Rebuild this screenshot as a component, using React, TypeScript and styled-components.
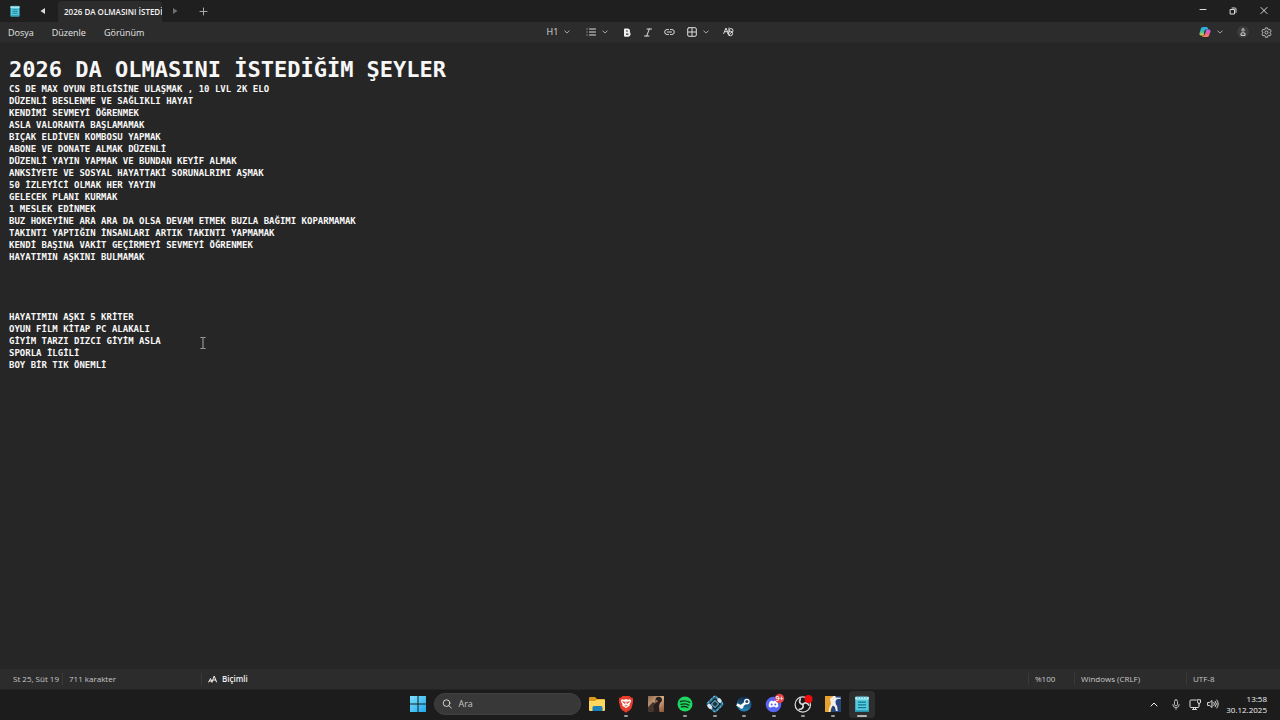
import React from "react";
import styled, { createGlobalStyle, css } from "styled-components";

const GlobalStyle = createGlobalStyle`
  * { box-sizing: border-box; }
  html, body { margin: 0; background: #262626; }
  button, input { font: inherit; color: inherit; }
`;

const Screen = styled.div`
  min-height: 100vh;
  display: flex;
  flex-direction: column;
  background: #262626;
  color: #e6e6e6;
  font-family: "Open Sans", "Noto Sans", sans-serif;
  font-size: 9px;
  line-height: 12px;
`;

const TitleBar = styled.header`
  display: flex;
  align-items: stretch;
  height: 22px;
  background: #1f1f1f;
`;

const AppIcon = styled.div`
  width: 28px;
  padding-left: 9px;
  display: flex;
  align-items: center;
`;

const IconButton = styled.button<{ $width: number; $dim?: boolean }>`
  width: ${(p) => p.$width}px;
  padding: 0;
  border: 0;
  background: none;
  display: flex;
  align-items: center;
  justify-content: center;
  gap: 6px;
  color: ${(p) => (p.$dim ? "#707070" : "#dcdcdc")};
`;

const Tab = styled.button`
  width: 104px;
  margin-top: 1px;
  padding: 0 0 0 6px;
  border: 0;
  border-radius: 4px 4px 0 0;
  background: #2c2c2c;
  color: #f4f4f4;
  font-weight: 600;
  font-size: 8px;
  text-align: left;
`;

const TabLabel = styled.span`
  display: block;
  overflow: hidden;
  white-space: nowrap;
`;

const Spacer = styled.div`
  flex: 1;
`;

const Toolbar = styled.div`
  display: grid;
  grid-template-columns: 1fr auto 1fr;
  height: 21px;
  background: #2c2c2c;
  border-bottom: 1px solid #292929;
`;

const Menus = styled.nav`
  display: flex;
  gap: 18px;
  padding: 2px 0 0 8px;
`;

const MenuButton = styled.button`
  padding: 0;
  border: 0;
  background: none;
`;

const Tools = styled.div`
  display: flex;
  padding-left: 2px;
`;

const ToolbarEnd = styled.div`
  display: flex;
  justify-content: flex-end;
  padding-right: 3px;
`;

const Avatar = styled.span`
  display: flex;
  align-items: center;
  justify-content: center;
  width: 12px;
  height: 12px;
  border-radius: 50%;
  background: #3c3c3c;
`;

const Editor = styled.main`
  position: relative;
  flex: 1;
  padding: 13px 9px;
  color: #f7f7f7;
  font-family: "DejaVu Sans Mono", monospace;
  font-weight: 700;
  font-size: 9px;
  line-height: 12px;
`;

const Heading = styled.h1`
  margin: 0;
  font-size: 22px;
  line-height: 27px;
`;

const Line = styled.p`
  margin: 0;
  min-height: 12px;
`;

const Pointer = styled.svg`
  position: absolute;
  left: 199px;
  top: 294px;
`;

const StatusBar = styled.footer`
  display: flex;
  align-items: center;
  height: 20px;
  padding-left: 13px;
  background: #2c2c2c;
  color: #c8c8c8;
  font-size: 8px;
`;

const StatusItem = styled.span<{ $width: number; $strong?: boolean }>`
  display: flex;
  align-items: center;
  gap: 5px;
  width: ${(p) => p.$width}px;
  white-space: nowrap;
  ${(p) =>
    p.$strong &&
    css`
      color: #f0f0f0;
      font-weight: 600;
    `}
`;

const Divider = styled.span`
  width: 1px;
  height: 12px;
  margin-right: 6px;
  background: #393939;
`;

const Taskbar = styled.div`
  display: grid;
  grid-template-columns: 1fr auto 1fr;
  align-items: center;
  height: 31px;
  padding-bottom: 2px;
  background: #1c1c1c;
  border-top: 1px solid #242424;
`;

const Dock = styled.nav`
  grid-column: 2;
  display: flex;
  align-items: center;
  gap: 3px;
`;

const Search = styled.label`
  display: flex;
  align-items: center;
  gap: 6px;
  width: 147px;
  height: 22px;
  padding: 0 7px;
  border: 1px solid #414141;
  border-radius: 11px;
  background: #383838;
`;

const SearchInput = styled.input`
  width: 100%;
  min-width: 0;
  padding: 0;
  border: 0;
  outline: 0;
  background: none;
  &::placeholder { color: #c4c4c4; opacity: 1; }
`;

const DockApps = styled.div`
  display: flex;
  justify-content: space-between;
  width: 291px;
`;

const DockButton = styled.button<{ $active?: boolean }>`
  display: flex;
  flex-direction: column;
  align-items: center;
  justify-content: flex-end;
  gap: 2px;
  width: 26px;
  height: 27px;
  padding: 0 0 1px;
  border: 0;
  border-radius: 4px;
  background: ${(p) => (p.$active ? "#2e2e2e" : "transparent")};
  svg { flex: none; overflow: visible; }
`;

const Running = styled.span<{ $state: "off" | "on" | "active" }>`
  flex: none;
  width: ${(p) => (p.$state === "active" ? 10 : 4)}px;
  height: 2px;
  border-radius: 1px;
  background: ${(p) =>
    p.$state === "off" ? "transparent" : p.$state === "on" ? "#9b9b9b" : "#b5b5b5"};
`;

const Tray = styled.div`
  display: flex;
  align-items: center;
  justify-content: flex-end;
  padding-right: 13px;
`;

const Clock = styled.time`
  margin-left: 5px;
  color: #f0f0f0;
  font-size: 8px;
  line-height: 11px;
  text-align: right;
`;

const Chevron = () => (
  <svg width="6" height="4" viewBox="0 0 6 4" fill="none" stroke="#a8a8a8" strokeWidth="1">
    <path d="M.5.6 3 3.1 5.500.6" />
  </svg>
);

const NotepadIcon = ({ size }: { size: number }) => (
  <svg width={size} height={size} viewBox="0 0 20 20">
    <rect x="2.500" y="2" width="15" height="17" rx="1" fill="#55cbe0" />
    <path d="M2.500 2h15v3h-15z" fill="#b6edf4" />
    <path d="M5.500.8v3M8.500.8v3M11.500.8v3M14.500.8v3" stroke="#3aa5bd" strokeWidth="1" />
    <path d="M5.500 8h9M5.500 11h9M5.500 14h9" stroke="#17758e" strokeWidth="1.300" />
    <path d="M2.500 17h15v1a1 1 0 0 1-1 1h-13a1 1 0 0 1-1-1z" fill="#2a93b0" />
  </svg>
);

const Stroke = ({
  w,
  h,
  d,
  sw = 1,
  color = "currentColor",
}: {
  w: number;
  h: number;
  d: string;
  sw?: number;
  color?: string;
}) => (
  <svg width={w} height={h} viewBox={`0 0 ${w} ${h}`} fill="none" stroke={color} strokeWidth={sw} strokeLinecap="round" strokeLinejoin="round">
    <path d={d} />
  </svg>
);

const CopilotIcon = () => (
  <svg width="12" height="12" viewBox="0 0 24 24">
    <defs>
      <linearGradient id="cpA" x1="0" y1="0" x2="0" y2="1">
        <stop offset="0" stopColor="#2aa7f0" />
        <stop offset=".55" stopColor="#35c3a2" />
        <stop offset="1" stopColor="#f0c93a" />
      </linearGradient>
      <linearGradient id="cpB" x1="0" y1="0" x2="0" y2="1">
        <stop offset="0" stopColor="#b06af0" />
        <stop offset=".5" stopColor="#ee5aa0" />
        <stop offset="1" stopColor="#f58a4b" />
      </linearGradient>
    </defs>
    <path d="M8 2h7c2 0 2.500 1.500 3 3l.5 2h-3c-2 0-3 1-3.500 3l-1.500 6c-.5 2-1.500 3-3.500 3H4c-3 0-3.500-2.500-2.800-5L3.500 6C4.200 3.500 5.500 2 8 2z" fill="url(#cpA)" />
    <path d="M16 22H9c-2 0-2.500-1.500-3-3h2.500c2 0 3-1 3.500-3l1.500-6c.5-2 1.500-3 3.500-3H20c3 0 3.500 2.500 2.800 5L20.500 18c-.7 2.500-2 4-4.500 4z" fill="url(#cpB)" />
    <path d="M12.500 7.500 10.500 16" stroke="#333" strokeWidth="2" />
  </svg>
);

const GearIcon = () => (
  <svg width="11" height="11" viewBox="0 0 24 24" fill="none" stroke="#c8c8c8" strokeWidth="2" strokeLinejoin="round">
    <path d="M9.700 2h4.600l.8 3 1.700 1 3-.9 2.300 4-2.200 2.200v1.800l2.200 2.100-2.300 4-3-.9-1.700 1-.8 3H9.700l-.8-3-1.700-1-3 .9-2.300-4 2.200-2.100v-1.800L1.900 9.100l2.300-4 3 .9 1.700-1z" />
    <circle cx="12" cy="12" r="3.300" />
  </svg>
);

const StartIcon = () => (
  <svg width="16" height="16" viewBox="0 0 16 16">
    <defs>
      <linearGradient id="win" x1="0" y1="0" x2="1" y2="1">
        <stop offset="0" stopColor="#7be0fb" />
        <stop offset="1" stopColor="#1fa8ee" />
      </linearGradient>
    </defs>
    <path d="M0 0h7.500v7.500H0zM8.500 0H16v7.500H8.500zM0 8.500h7.500V16H0zM8.500 8.500H16V16H8.500z" fill="url(#win)" />
  </svg>
);

const FolderIcon = () => (
  <svg width="18" height="18" viewBox="0 0 18 18">
    <path d="M1 3a1 1 0 0 1 1-1h5l2 2h7a1 1 0 0 1 1 1v3H1z" fill="#d99a1c" />
    <path d="M1 6h6l2-1.500h7a1 1 0 0 1 1 1V15a1 1 0 0 1-1 1H2a1 1 0 0 1-1-1z" fill="#fbd75e" />
    <path d="M4.500 16v-3.500a1.500 1.500 0 0 1 1.500-1.500h7a1.500 1.500 0 0 1 1.500 1.500V16z" fill="#1b7fb8" />
  </svg>
);

const BraveIcon = () => (
  <svg width="18" height="18" viewBox="0 0 18 18">
    <path d="M5.500 1h7l1.500 1.600 1.700.2.5 2.400-.4 1 .2 1.300-1.500 5.500c-.5 1.500-2.500 2.800-5.500 4.700-3-1.900-5-3.200-5.500-4.700L2 7.500l.2-1.300-.4-1 .5-2.400 1.700-.2z" fill="#e93c2b" />
    <path d="M4.800 4.300 7 4.700l2-.6 2 .6 2.200-.4 1 1.900-1.700 3.100.2 1.400-2.200 1.200L9 13.300l-1.500-1.400-2.200-1.200.2-1.400-1.700-3.100z" fill="#fff" />
    <path d="m5.500 6.600 2.500.7-.5 1.200zM12.500 6.600l-2.500.7.5 1.200zM9 6v3.500M7.500 10.500l1.500.7 1.500-.7" fill="#e93c2b" stroke="#e93c2b" strokeWidth=".6" />
  </svg>
);

const GameIcon = () => (
  <svg width="18" height="18" viewBox="0 0 18 18">
    <defs>
      <linearGradient id="gm" x1="0" y1="0" x2="1" y2="1">
        <stop offset="0" stopColor="#8b6850" />
        <stop offset=".5" stopColor="#d8aa80" />
        <stop offset="1" stopColor="#8b5138" />
      </linearGradient>
    </defs>
    <path d="M1 1h16v16H1z" fill="url(#gm)" />
    <path d="M1 17v-5l3-3 2-2 2 1v4l3 1v4z" fill="#49372f" />
    <path d="M8.500 4.500a3.300 3.300 0 0 1 6.500 0c0 2-1 2.500-2 3.500l-1 3 .5 6h-6l.5-4-1-2 2.500-3z" fill="#251f20" />
    <path d="m9 5 1.700.5-.4 2-1.300-.5z" fill="#b8714d" />
  </svg>
);

const SpotifyIcon = () => (
  <svg width="18" height="18" viewBox="0 0 18 18">
    <circle cx="9" cy="9" r="7.500" fill="#1ed760" />
    <path d="M4.500 6.500c3-1 6.500-.7 9.200.8M5 9.300c2.700-.8 5.400-.5 7.800.8M5.500 11.800c2.200-.6 4.500-.4 6.400.7" fill="none" stroke="#14351f" strokeWidth="1.400" strokeLinecap="round" />
  </svg>
);

const HexAppIcon = () => (
  <svg width="18" height="18" viewBox="0 0 18 18">
    <g transform="rotate(45 9 9)" fill="none">
      <rect x="3.500" y="3.500" width="11" height="11" rx="2" stroke="#2f718f" strokeWidth="2.500" />
      <rect x="3" y="3" width="12" height="12" rx="2" stroke="#6dbfda" strokeWidth="1" strokeDasharray="2 2" />
      <rect x="6.500" y="6.500" width="5" height="5" fill="#1c3446" stroke="#59b2cf" />
    </g>
    <ellipse cx="3.800" cy="11.500" rx="2" ry="2.900" transform="rotate(-40 3.800 11.500)" fill="#d5e6f2" />
    <ellipse cx="13.500" cy="5.500" rx="1.900" ry="2.600" transform="rotate(-40 13.500 5.500)" fill="#d5e6f2" />
  </svg>
);

const SteamIcon = () => (
  <svg width="18" height="18" viewBox="0 0 18 18">
    <defs>
      <linearGradient id="st" x1="0" y1="0" x2="0" y2="1">
        <stop offset="0" stopColor="#122846" />
        <stop offset="1" stopColor="#2387bd" />
      </linearGradient>
    </defs>
    <circle cx="9" cy="9" r="7.500" fill="url(#st)" />
    <path d="m1.800 9.500 4.200 2 5.300-4.500" stroke="#fff" strokeWidth="2.500" fill="none" />
    <circle cx="11.800" cy="6.600" r="2.900" fill="#fff" />
    <circle cx="11.800" cy="6.600" r="1.500" fill="#1c4b74" />
    <circle cx="6.500" cy="11.700" r="2" fill="#fff" />
  </svg>
);

const DiscordIcon = () => (
  <svg width="18" height="18" viewBox="0 0 18 18">
    <circle cx="8.500" cy="9.500" r="7.800" fill="#5865f2" />
    <g transform="translate(-.5 -1.500)">
      <path d="M5.600 7.800 7.700 7l.5.8h1.600l.5-.8 2.100.8c1 1.600 1.500 3.300 1.400 5.200-.8.700-1.600 1.100-2.500 1.300l-.6-1H7.300l-.6 1c-.9-.2-1.700-.6-2.500-1.300-.1-1.900.4-3.600 1.400-5.200z" fill="#fff" />
      <circle cx="7.200" cy="11" r="1" fill="#5865f2" />
      <circle cx="10.800" cy="11" r="1" fill="#5865f2" />
    </g>
    <circle cx="14.500" cy="3.500" r="4.700" fill="#e0454c" />
    <text x="14.500" y="6" textAnchor="middle" fontSize="7" fontWeight="600" fill="#fff" fontFamily="Open Sans, sans-serif">9+</text>
  </svg>
);

const ObsIcon = () => (
  <svg width="18" height="18" viewBox="0 0 18 18">
    <circle cx="8.800" cy="9.500" r="7.700" fill="#18181a" stroke="#dedede" strokeWidth="1.200" />
    <g transform="translate(-.7 -1.500)" fill="none" stroke="#d7d7d7" strokeWidth="1.700" strokeLinecap="round">
      <path d="M7 5.500c-1.500 2.700-.5 5 2.500 5.500" />
      <path d="M7 5.500c-1.500 2.700-.5 5 2.500 5.500" transform="rotate(120 9.500 11)" />
      <path d="M7 5.500c-1.500 2.700-.5 5 2.500 5.500" transform="rotate(240 9.500 11)" />
    </g>
    <circle cx="14.500" cy="4" r="4" fill="#ee0d0d" />
  </svg>
);

const CounterStrikeIcon = () => (
  <svg width="18" height="18" viewBox="0 0 18 18">
    <path d="M1 1h9L7 17H1z" fill="#e9a12d" />
    <path d="M10 1h7v16H7z" fill="#26447d" />
    <path d="M6 3.500 8.500 2l.8-1h2l.5 1.500 5 .2v1l-4 .6-1.300 2 .3 2.700 1.400 2.500.5 4.500h-1.800l-1-4L9 10.500 7 13l-1 4H4.500l.8-4.500L7 9l-.5-3z" fill="#f2f0ea" />
  </svg>
);

const notes = [
  "CS DE MAX OYUN BİLGİSİNE ULAŞMAK , 10 LVL 2K ELO",
  "DÜZENLİ BESLENME VE SAĞLIKLI HAYAT",
  "KENDİMİ SEVMEYİ ÖĞRENMEK",
  "ASLA VALORANTA BAŞLAMAMAK",
  "BIÇAK ELDİVEN KOMBOSU YAPMAK",
  "ABONE VE DONATE ALMAK DÜZENLİ",
  "DÜZENLİ YAYIN YAPMAK VE BUNDAN KEYİF ALMAK",
  "ANKSİYETE VE SOSYAL HAYATTAKİ SORUNALRIMI AŞMAK",
  "50 İZLEYİCİ OLMAK HER YAYIN",
  "GELECEK PLANI KURMAK",
  "1 MESLEK EDİNMEK",
  "BUZ HOKEYİNE ARA ARA DA OLSA DEVAM ETMEK BUZLA BAĞIMI KOPARMAMAK",
  "TAKINTI YAPTIĞIN İNSANLARI ARTIK TAKINTI YAPMAMAK",
  "KENDİ BAŞINA VAKİT GEÇİRMEYİ SEVMEYİ ÖĞRENMEK",
  "HAYATIMIN AŞKINI BULMAMAK",
  "",
  "",
  "",
  "",
  "HAYATIMIN AŞKI 5 KRİTER",
  "OYUN FİLM KİTAP PC ALAKALI",
  "GİYİM TARZI DIZCI GİYİM ASLA",
  "SPORLA İLGİLİ",
  "BOY BİR TIK ÖNEMLİ",
];

type App = { name: string; icon: React.ReactNode; state: "off" | "on" | "active" };

const apps: App[] = [
  { name: "Dosya Gezgini", icon: <FolderIcon />, state: "off" },
  { name: "Brave", icon: <BraveIcon />, state: "on" },
  { name: "Oyun", icon: <GameIcon />, state: "off" },
  { name: "Spotify", icon: <SpotifyIcon />, state: "on" },
  { name: "Uygulama", icon: <HexAppIcon />, state: "on" },
  { name: "Steam", icon: <SteamIcon />, state: "on" },
  { name: "Discord", icon: <DiscordIcon />, state: "on" },
  { name: "OBS", icon: <ObsIcon />, state: "on" },
  { name: "Counter-Strike 2", icon: <CounterStrikeIcon />, state: "on" },
  { name: "Not Defteri", icon: <NotepadIcon size={18} />, state: "active" },
];

export default function App() {
  return (
    <Screen>
      <GlobalStyle />
      <TitleBar>
        <AppIcon>
          <NotepadIcon size={12} />
        </AppIcon>
        <IconButton $width={30} aria-label="Sekmeleri geri kaydır">
          <svg width="6" height="6" viewBox="0 0 6 6"><path d="M5 0v6L.5 3z" fill="currentColor" /></svg>
        </IconButton>
        <Tab>
          <TabLabel>2026 DA OLMASINI İSTEDİĞİM ŞEYLER</TabLabel>
        </Tab>
        <IconButton $width={26} $dim aria-label="Sekmeleri ileri kaydır">
          <svg width="6" height="6" viewBox="0 0 6 6"><path d="M1 0v6l4.500-3z" fill="currentColor" /></svg>
        </IconButton>
        <IconButton $width={30} aria-label="Yeni sekme">
          <Stroke w={9} h={9} d="M4.500 1v7M1 4.500h7" color="#a8a8a8" />
        </IconButton>
        <Spacer />
        <IconButton $width={30} aria-label="Simge durumuna küçült">
          <Stroke w={8} h={8} d="M1 2.500h6" />
        </IconButton>
        <IconButton $width={30} aria-label="Geri yükle">
          <Stroke w={8} h={8} d="M1.500 2.500h4v4.500h-4zM3 1h3a1 1 0 0 1 1 1v3.500" />
        </IconButton>
        <IconButton $width={32} aria-label="Kapat">
          <Stroke w={8} h={8} d="m1 .5 6 6M7 .5l-6 6" />
        </IconButton>
      </TitleBar>

      <Toolbar>
        <Menus>
          <MenuButton>Dosya</MenuButton>
          <MenuButton>Düzenle</MenuButton>
          <MenuButton>Görünüm</MenuButton>
        </Menus>
        <Tools>
          <IconButton $width={38} aria-label="Başlık 1">H1 <Chevron /></IconButton>
          <IconButton $width={38} aria-label="Liste">
            <Stroke w={10} h={8} d="M1 1h.1M1 4h.1M1 7h.1M3.500 1h6M3.500 4h6M3.500 7h6" />
            <Chevron />
          </IconButton>
          <IconButton $width={22} aria-label="Kalın">
            <Stroke w={8} h={9} d="M2 1.500h2.500a1.500 1.500 0 0 1 0 3H2zM2 4.500h3a1.600 1.600 0 0 1 0 3.200H2z" sw={2} color="#f2f2f2" />
          </IconButton>
          <IconButton $width={21} aria-label="İtalik">
            <Stroke w={8} h={9} d="M3 1h4.500M.5 8H5M5.300 1 2.700 8" />
          </IconButton>
          <IconButton $width={22} aria-label="Bağlantı">
            <Stroke w={11} h={8} d="M4.500 1.500H3.200a2.500 2.500 0 0 0 0 5h1.300M6.500 1.500h1.300a2.500 2.500 0 0 1 0 5H6.500M3.500 4h4" />
          </IconButton>
          <IconButton $width={34} aria-label="Tablo">
            <Stroke w={10} h={10} d="M2 .7h6A1.300 1.300 0 0 1 9.300 2v6A1.300 1.300 0 0 1 8 9.300H2A1.300 1.300 0 0 1 .7 8V2A1.300 1.300 0 0 1 2 .7zM5 1v8M1 5h8" />
            <Chevron />
          </IconButton>
          <IconButton $width={28} aria-label="Biçimlendirmeyi temizle">
            <Stroke w={11} h={10} d="M.7 6.500 3 1l2.200 5.500M1.500 4.700h3M6 1v4.500M6 3.500a2 2 0 1 1 2.500 2M5 6.500a2.300 2.300 0 1 0 4.600 0 2.300 2.300 0 0 0-4.600 0M5.800 8l3-3" />
          </IconButton>
        </Tools>
        <ToolbarEnd>
          <IconButton $width={40} aria-label="Copilot"><CopilotIcon /><Chevron /></IconButton>
          <IconButton $width={24} aria-label="Hesap">
            <Avatar>
              <Stroke w={6} h={8} d="M3 .8a1.200 1.200 0 1 0 .1 0M1 7V6a1.200 1.200 0 0 1 1.200-1.200h1.600A1.200 1.200 0 0 1 5 6v1z" />
            </Avatar>
          </IconButton>
          <IconButton $width={22} aria-label="Ayarlar"><GearIcon /></IconButton>
        </ToolbarEnd>
      </Toolbar>

      <Editor>
        <Heading>2026 DA OLMASINI İSTEDİĞİM ŞEYLER</Heading>
        {notes.map((text, i) => (
          <Line key={i}>{text}</Line>
        ))}
        <Pointer width="8" height="12" viewBox="0 0 8 12" fill="none" stroke="#a8a8a8">
          <path d="M1.500.5h2l.5.5.5-.5h2M4 1v10M1.500 11.500h2L4 11l.5.5h2" />
        </Pointer>
      </Editor>

      <StatusBar>
        <StatusItem $width={49}>St 25, Süt 19</StatusItem>
        <Divider />
        <StatusItem $width={132}>711 karakter</StatusItem>
        <Divider />
        <StatusItem $width={60} $strong>
          <Stroke w={9} h={8} d="M.7 7 2.500 3.500 4 7M1.500 6h2M4 7l2.200-6 2.300 6M5 5h2.800" />
          Biçimli
        </StatusItem>
        <Spacer />
        <Divider />
        <StatusItem $width={39}>%100</StatusItem>
        <Divider />
        <StatusItem $width={105}>Windows (CRLF)</StatusItem>
        <Divider />
        <StatusItem $width={87}>UTF-8</StatusItem>
      </StatusBar>

      <Taskbar>
        <Dock>
          <IconButton $width={26} aria-label="Başlat"><StartIcon /></IconButton>
          <Search>
            <Stroke w={12} h={12} d="M9 5a3.800 3.800 0 1 1-7.600 0A3.800 3.800 0 0 1 9 5zM8 8l2.800 2.800" color="#e6e6e6" />
            <SearchInput type="text" placeholder="Ara" aria-label="Ara" />
          </Search>
          <DockApps>
            {apps.map((app) => (
              <DockButton key={app.name} $active={app.state === "active"} aria-label={app.name}>
                {app.icon}
                <Running $state={app.state} />
              </DockButton>
            ))}
          </DockApps>
        </Dock>
        <Tray>
          <IconButton $width={22} aria-label="Gizli simgeleri göster">
            <Stroke w={8} h={5} d="M1 4 4 1l3 3" sw={1} color="#f0f0f0" />
          </IconButton>
          <IconButton $width={22} aria-label="Mikrofon">
            <Stroke w={8} h={11} d="M4 .8a1.500 1.500 0 0 1 1.500 1.500v3a1.500 1.500 0 0 1-3 0v-3A1.500 1.500 0 0 1 4 .8zM.8 5.500a3.200 3.200 0 0 0 6.400 0M4 8.700v1.800" color="#b4b4b4" />
          </IconButton>
          <IconButton $width={34} aria-label="Ağ ve ses">
            <Stroke w={12} h={11} d="M7 1H2a1 1 0 0 0-1 1v5.500a1 1 0 0 0 1 1h7a1 1 0 0 0 1-1V6M3.500 10.500h4M4.500 8.500v2M6.500 8.500v2M8.500.8h3V3a1.500 1.500 0 0 1-3 0zM10 4.500V6" />
            <Stroke w={12} h={10} d="M1 3.500h1.700L5 1.500v7l-2.300-2H1zM6.800 3.500a2 2 0 0 1 0 3M8.300 2.300a4 4 0 0 1 0 5.400M9.800 1a6 6 0 0 1 0 8" />
          </IconButton>
          <Clock>
            <div>13:58</div>
            <div>30.12.2025</div>
          </Clock>
        </Tray>
      </Taskbar>
    </Screen>
  );
}
